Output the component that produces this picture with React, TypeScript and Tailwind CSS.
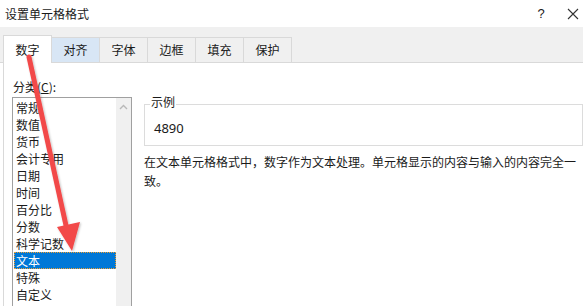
import React from "react"

const tabs = ["数字", "对齐", "字体", "边框", "填充", "保护"]
const categories = ["常规", "数值", "货币", "会计专用", "日期", "时间", "百分比", "分数", "科学记数", "文本", "特殊", "自定义"]

export default function App() {
  return (
    <div
      className="relative w-[583px] h-[306px] overflow-hidden bg-white text-[12px] text-[#1a1a1a]"
      style={{ fontFamily: '"Noto Sans CJK SC", "Noto Sans", sans-serif' }}
    >
      {/* title bar */}
      <div className="h-[27px] flex items-center pl-[5px]">
        <span className="flex-1 text-[12px] leading-none">设置单元格格式</span>
        <span className="w-[30px] text-center text-[13px] leading-none" style={{ fontFamily: '"Liberation Sans", sans-serif' }}>?</span>
        <svg width="14" height="14" viewBox="0 0 14 14" className="mr-[3px] ml-[10px]">
          <path d="M2 2 L12 12 M12 2 L2 12" stroke="#333" strokeWidth="1.1" />
        </svg>
      </div>

      {/* tab strip */}
      <div className="h-[36px] bg-[#f0f0f0] flex items-end pl-[3px] border-b border-[#d9d9d9]">
        {tabs.map((t, i) =>
          i === 0 ? (
            <div key={t} className="w-[49px] h-[28px] -mb-px bg-white border border-b-0 border-[#d9d9d9] flex items-center justify-center">
              {t}
            </div>
          ) : (
            <div
              key={t}
              className={`w-[48px] h-[25px] border border-l-0 border-b-0 border-[#d9d9d9] flex items-center justify-center ${
                i === 1 ? "bg-[#d8e6f5]" : "bg-[#f0f0f0]"
              }`}
            >
              {t}
            </div>
          )
        )}
      </div>

      {/* body */}
      <div className="ml-[3px] h-[243px] border-l border-[#d9d9d9] flex pl-[8px]">
        <div className="w-[120px] shrink-0 flex flex-col">
          <div className="h-[34px] flex items-end pb-[4px] pl-px leading-none">
            分类(<span className="underline">C</span>):
          </div>
          <div className="flex-1 flex border border-[#a0a0a0] border-b-0">
            <div className="flex-1 pt-[1px] pl-px">
              {categories.map((c) => (
                <div
                  key={c}
                  className={`h-[17px] flex items-center pl-[2px] leading-none ${
                    c === "文本" ? "bg-[#0078d7] text-white outline-1 outline-dotted outline-[#f0a030] -outline-offset-1" : ""
                  }`}
                >
                  {c}
                </div>
              ))}
            </div>
            <div className="w-[15px] bg-[#f0f0f0] flex justify-center pt-[6px]">
              <svg width="9" height="6" viewBox="0 0 9 6">
                <path d="M1 5 L4.5 1.5 L8 5" stroke="#b8b8b8" strokeWidth="1.4" fill="none" />
              </svg>
            </div>
          </div>
        </div>

        <div className="flex-1 pl-[12px] pt-[41px] flex flex-col">
          <div className="relative h-[42px] border border-[#dcdcdc] flex items-center pl-[9px] pt-[8px]">
            <span className="absolute -top-[9px] left-[5px] bg-white px-px leading-none text-[12px]">示例</span>
            <span className="text-[13px]" style={{ fontFamily: '"Noto Sans", sans-serif' }}>4890</span>
          </div>
          <p className="mt-[6px] leading-[19px] w-[434px]">
            在文本单元格格式中，数字作为文本处理。单元格显示的内容与输入的内容完全一致。
          </p>
        </div>
      </div>

      {/* red annotation arrow */}
      <svg className="absolute left-0 top-0 pointer-events-none" width="583" height="306">
        <defs>
          <filter id="sh" x="-50%" y="-50%" width="200%" height="200%">
            <feDropShadow dx="1" dy="1" stdDeviation="1" floodColor="#000" floodOpacity="0.25" />
          </filter>
        </defs>
        <g filter="url(#sh)">
          <line x1="29" y1="57" x2="67" y2="230" stroke="#f24848" strokeWidth="5" strokeLinecap="round" />
          <path d="M57 227 L80 222 L72 251 Z" fill="#f24848" />
        </g>
      </svg>
    </div>
  )
}
